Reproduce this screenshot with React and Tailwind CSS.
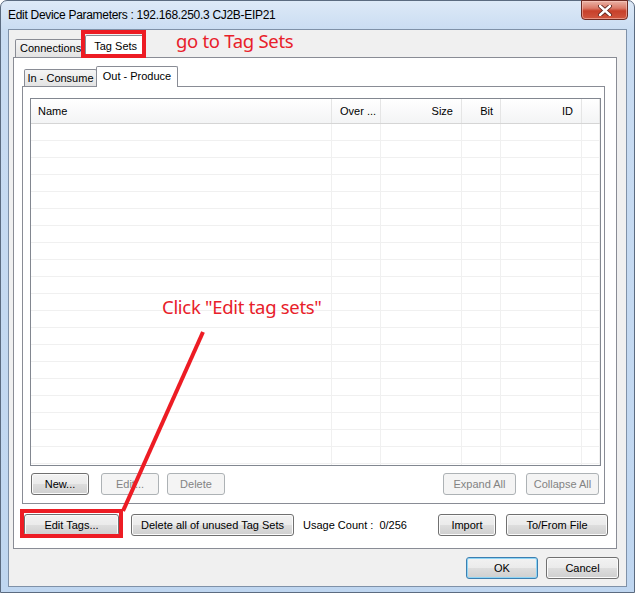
import React from "react";

const btn =
  "h-[22px] rounded-[3px] border border-[#707070] bg-[linear-gradient(#f2f2f2_0%,#ebebeb_48%,#dddddd_52%,#cfcfcf_100%)] shadow-[inset_0_0_0_1px_#fbfbfb] text-[11px] text-black flex items-center justify-center leading-none";
const btnDis =
  "h-[22px] rounded-[3px] border border-[#adb2b5] bg-[#f4f4f4] text-[11px] text-[#838383] flex items-center justify-center leading-none";

const cols = [
  { w: "w-[301px]", label: "Name", align: "justify-start pl-[7px]" },
  { w: "w-[49px]", label: "Over ...", align: "justify-start pl-[8px]" },
  { w: "w-[81px]", label: "Size", align: "justify-end pr-[8px]" },
  { w: "w-[39px]", label: "Bit", align: "justify-end pr-[7px]" },
  { w: "w-[81px]", label: "ID", align: "justify-end pr-[8px]" },
  { w: "flex-1", label: "", align: "" },
];

function ListBox() {
  const rows = Array.from({ length: 21 });
  return (
    <div className="w-[571px] h-[368px] border border-[#828790] bg-white overflow-hidden flex flex-col">
      <div className="h-[25px] flex bg-[linear-gradient(#ffffff,#f3f4f5)] border-b border-[#d5d5d5] shrink-0">
        {cols.map((c, i) => (
          <div
            key={i}
            className={`${c.w} h-full flex items-center ${c.align} border-r border-[#e5e5e5] text-[11px] text-black pt-[1px]`}
          >
            {c.label}
          </div>
        ))}
      </div>
      {rows.map((_, r) => (
        <div key={r} className="h-[17px] flex border-b border-[#f0f0f0] shrink-0">
          {cols.map((c, i) => (
            <div key={i} className={`${c.w} h-full border-r border-[#f0f0f0]`} />
          ))}
        </div>
      ))}
    </div>
  );
}

export default function App() {
  return (
    <div className="relative w-[635px] h-[593px] bg-white overflow-hidden font-['Liberation_Sans',Arial,sans-serif] text-[11px]">
      {/* Window */}
      <div className="w-[635px] h-[593px] rounded-t-[7px] border border-[#5b6b80] bg-[linear-gradient(#dde9f7_0px,#c9dcf2_30px,#bfd6f0_100%)] flex flex-col">
        {/* Title bar */}
        <div className="h-[28px] flex items-start relative shrink-0">
          <div className="pl-[7px] pt-[6px] text-[12px] tracking-[-0.3px] text-black font-['Liberation_Sans',Arial,sans-serif] leading-[16px]">
            Edit Device Parameters : 192.168.250.3 CJ2B-EIP21
          </div>
          <div className="absolute right-[6px] top-[-1px] w-[47px] h-[20px] rounded-b-[4px] border border-[#6e2a22] bg-[linear-gradient(#eab3a6_0%,#db7a68_40%,#c7402a_55%,#d0563f_100%)] shadow-[inset_0_0_0_1px_rgba(255,210,200,0.5)] flex items-center justify-center">
            <svg width="14" height="11" viewBox="0 0 14 11">
              <path d="M2 1 L12 10 M12 1 L2 10" stroke="#5a2019" strokeWidth="4.2" strokeLinecap="round" />
              <path d="M2 1 L12 10 M12 1 L2 10" stroke="#ffffff" strokeWidth="2.4" strokeLinecap="round" />
            </svg>
          </div>
        </div>

        {/* Client area */}
        <div className="mx-[7px] mb-[5px] flex-1 border border-[#7f91a8] bg-[#f0f0f0] flex flex-col">
          {/* Outer tab strip */}
          <div className="h-[27px] pl-[6px] flex items-end shrink-0">
            <div className="h-[18px] px-[4px] flex items-center border border-b-0 border-[#898c95] bg-[linear-gradient(#f5f5f5,#e3e3e3)] rounded-t-[2px] text-black">
              Connections
            </div>
            <div className="relative z-10 -mb-px h-[23px] w-[61px] -ml-px flex items-center justify-center border border-b-0 border-[#898c95] bg-white rounded-t-[2px] text-black pb-[1px]">
              Tag Sets
            </div>
          </div>

          {/* Outer tab panel */}
          <div className="ml-[4px] w-[604px] h-[492px] border border-[#898c95] bg-white flex flex-col shrink-0">
            {/* inner tab strip */}
            <div className="h-[28px] pl-[10px] flex items-end shrink-0">
              <div className="h-[17px] w-[73px] flex items-center justify-center border border-b-0 border-[#898c95] bg-[linear-gradient(#f5f5f5,#e3e3e3)] rounded-t-[2px] text-black">
                In - Consume
              </div>
              <div className="relative z-10 -mb-px h-[21px] w-[82px] -ml-px flex items-center justify-center border border-b-0 border-[#898c95] bg-white rounded-t-[2px] text-black pb-[2px]">
                Out - Produce
              </div>
            </div>
            {/* inner panel */}
            <div className="ml-[8px] w-[583px] h-[418px] border border-[#898c95] bg-white flex flex-col shrink-0">
              <div className="ml-[7px] mt-[11px]">
                <ListBox />
              </div>
              <div className="mt-[7px] ml-[8px] w-[568px] flex items-center">
                <div className={`${btn} w-[58px]`}>New...</div>
                <div className={`${btnDis} w-[58px] ml-[12px]`}>Edit...</div>
                <div className={`${btnDis} w-[58px] ml-[8px]`}>Delete</div>
                <div className={`${btnDis} w-[73px] ml-auto`}>Expand All</div>
                <div className={`${btnDis} w-[73px] ml-[10px]`}>Collapse All</div>
              </div>
            </div>
            {/* second row */}
            <div className="mt-[10px] ml-[10px] flex items-center">
              <div className={`${btn} w-[95px]`}>Edit Tags...</div>
              <div className={`${btn} w-[163px] ml-[12px]`}>Delete all of unused Tag Sets</div>
              <div className="ml-[9px] text-black">Usage Count :&nbsp; 0/256</div>
              <div className={`${btn} w-[58px] ml-[31px]`}>Import</div>
              <div className={`${btn} w-[102px] ml-[10px]`}>To/From File</div>
            </div>
          </div>

          {/* OK / Cancel */}
          <div className="mt-[8px] flex justify-end pr-[7px]">
            <div className="h-[22px] w-[72px] rounded-[3px] border border-[#3c7fb1] bg-[linear-gradient(#f2f2f2_0%,#ebebeb_48%,#dddddd_52%,#cfcfcf_100%)] shadow-[inset_0_0_0_1px_#8fd5f5] text-[11px] text-black flex items-center justify-center">
              OK
            </div>
            <div className={`${btn} w-[73px] ml-[8px]`}>Cancel</div>
          </div>
        </div>
      </div>

      {/* Annotations */}
      <div className="absolute z-20 left-[81px] top-[30px] w-[65px] h-[28px] border-[4px] border-[#ed1c24]" />
      <div className="absolute z-20 left-[20px] top-[509px] w-[103px] h-[29px] border-[4px] border-[#ed1c24]" />
      <div className="absolute z-20 left-[176px] top-[29px] text-[18.5px] leading-[24px] text-[#e8202a] font-['Noto_Sans',sans-serif] tracking-[-0.3px]">
        go to Tag Sets
      </div>
      <div className="absolute z-20 left-[162px] top-[295px] text-[18.5px] leading-[24px] text-[#e8202a] font-['Noto_Sans',sans-serif] tracking-[-0.3px]">
        Click "Edit tag sets"
      </div>
      <svg className="absolute z-20 left-0 top-0" width="635" height="593" viewBox="0 0 635 593">
        <line x1="203" y1="332" x2="123" y2="511" stroke="#ed1c24" strokeWidth="4" />
      </svg>
    </div>
  );
}
